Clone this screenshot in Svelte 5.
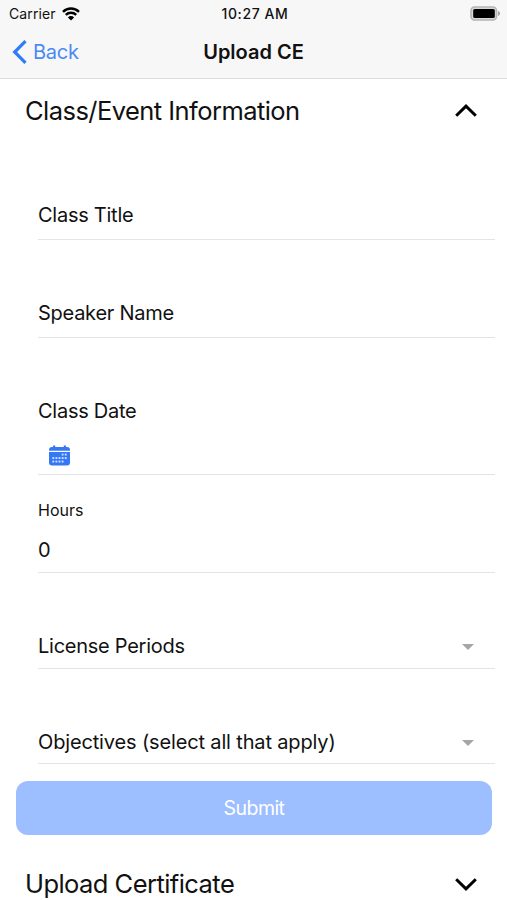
<script lang="ts">
    let infoOpen = $state(true);
    let certificateOpen = $state(false);
    let hours = $state(0);

    const textFields = ['Class Title', 'Speaker Name'];
    const selectFields = [
        { id: 'periods', label: 'License Periods' },
        { id: 'objectives', label: 'Objectives (select all that apply)' }
    ];

    // Day dots of the calendar icon, [column, row]
    const days = [
        [3, 0], [4, 0],
        [0, 1], [1, 1], [2, 1], [3, 1], [4, 1],
        [0, 2], [1, 2], [2, 2], [3, 2]
    ];
</script>

{#snippet chevron(open: boolean)}
    <svg class="chevron" width="24" height="14" viewBox="0 0 24 14" aria-hidden="true">
        <path d={open ? 'M2.2 11.8 12 2.2l9.8 9.6' : 'M2.2 2.2 12 11.8l9.8-9.6'} />
    </svg>
{/snippet}

<div class="screen">
    <header>
        <div class="status">
            <div class="carrier">
                <span>Carrier</span>
                <svg width="18" height="14" viewBox="0 0 18 14" aria-hidden="true">
                    <path d="M1 4.8a11.4 11.4 0 0 1 16 0" />
                    <path d="M3.8 7.9a7.4 7.4 0 0 1 10.4 0" />
                    <path class="solid" d="M9 13.6 5.9 10.4a4.4 4.4 0 0 1 6.2 0z" />
                </svg>
            </div>
            <span class="time">10:27 AM</span>
            <svg class="battery" width="31" height="15" viewBox="0 0 31 15" aria-hidden="true">
                <rect x="1" y="1" width="25.5" height="13" rx="3.5" fill="#d8d8d8" stroke="#b5b5b5" stroke-width="1.6" />
                <rect x="3.2" y="3" width="21.6" height="9" rx="1.5" fill="#000" />
                <path d="M28 5v5c2.6-1 2.6-4 0-5z" fill="#a0a0a0" />
            </svg>
        </div>
        <nav>
            <button class="back">
                <svg width="16" height="26" viewBox="0 0 16 26" aria-hidden="true">
                    <path d="M13.5 2.2 2.7 13l10.8 10.8" />
                </svg>
                <span>Back</span>
            </button>
            <h1>Upload CE</h1>
        </nav>
    </header>

    <button class="section" onclick={() => (infoOpen = !infoOpen)}>
        <span>Class/Event Information</span>
        {@render chevron(infoOpen)}
    </button>

    {#if infoOpen}
        <form>
            {#each textFields as label}
                <div class="field">
                    <span class="label">{label}</span>
                </div>
            {/each}
            <div class="field date">
                <span class="label">Class Date</span>
                <svg width="21" height="21" viewBox="0 0 21 21" aria-hidden="true">
                    <path d="M3 2h1V.6h2.2V2h8.600V.6H17V2h1a3 3 0 0 1 3 3v.8H0V5a3 3 0 0 1 3-3z" />
                    <path d="M0 7h21v10.500a3 3 0 0 1-3 3H3a3 3 0 0 1-3-3z" />
                    {#each days as [col, row]}
                        <rect class="day" x={3.4 + col * 3.1} y={8.600 + row * 3.5} width="1.8" height="1.9" />
                    {/each}
                </svg>
            </div>
            <div class="field hours">
                <span class="small-label">Hours</span>
                <span class="value">{hours}</span>
            </div>
            {#each selectFields as field}
                <div class="field select {field.id}">
                    <span class="label">{field.label}</span>
                    <span class="caret"></span>
                </div>
            {/each}
            <button type="button" class="submit" disabled>Submit</button>
        </form>
    {/if}

    <button class="section certificate" onclick={() => (certificateOpen = !certificateOpen)}>
        <span>Upload Certificate</span>
        {@render chevron(certificateOpen)}
    </button>
</div>

<style>
    :global(body) {
        margin: 0;
        background: #fff;
    }

    .screen {
        height: 900px;
        overflow: hidden;
        background: #fff;
        color: #111;
        font-family: Inter, "Liberation Sans", sans-serif;
        font-size: 20px;
    }

    button {
        margin: 0;
        padding: 0;
        border: none;
        background: none;
        color: inherit;
        font: inherit;
    }

    svg {
        display: block;
        fill: none;
    }

    header {
        box-sizing: border-box;
        height: 79px;
        border-bottom: 1px solid #dedede;
        background: #f7f7f7;
    }

    .status {
        display: grid;
        grid-template-columns: 1fr auto 1fr;
        align-items: center;
        height: 27px;
        padding: 0 6px 0 9px;
        font-size: 14px;
    }

    .carrier {
        display: flex;
        align-items: center;
        gap: 6px;
        letter-spacing: 0.1px;
    }

    .carrier path {
        stroke: #000;
        stroke-width: 2.4;
    }

    .carrier .solid {
        fill: #000;
        stroke: none;
    }

    .time {
        font-weight: 500;
        letter-spacing: 0.6px;
    }

    .battery {
        justify-self: end;
    }

    nav {
        display: grid;
        grid-template-columns: 1fr auto 1fr;
        align-items: center;
        height: 50px;
        padding: 0 12px;
    }

    .back {
        display: flex;
        align-items: center;
        gap: 5px;
        color: #4a8af5;
        letter-spacing: -0.25px;
    }

    .back path {
        stroke: #2f7cf6;
        stroke-width: 3.2;
    }

    h1 {
        margin: 0;
        font-size: 20px;
        font-weight: 600;
    }

    .section {
        display: flex;
        align-items: center;
        justify-content: space-between;
        width: 100%;
        height: 63px;
        padding: 0 29px 0 26px;
        font-size: 25.5px;
        letter-spacing: -0.55px;
    }

    .section span {
        margin-left: -1px;
    }

    .chevron path {
        stroke: #000;
        stroke-width: 3;
    }

    .field {
        box-sizing: border-box;
        display: flex;
        flex-direction: column;
        height: 98px;
        margin: 0 12px 0 38px;
        padding-top: 61px;
        border-bottom: 1px solid #e4e4e4;
        line-height: 24px;
    }

    .label {
        letter-spacing: -0.26px;
    }

    .date {
        height: 137px;
    }

    .date svg {
        margin: 22px 0 0 11px;
        fill: #3478f6;
    }

    .day {
        fill: #d5e4ff;
    }

    .hours {
        padding-top: 23px;
        gap: 16px;
    }

    .small-label {
        font-size: 16px;
    }

    .select {
        flex-direction: row;
        justify-content: space-between;
        height: 96px;
        padding-right: 21px;
    }

    .objectives {
        height: 95px;
    }

    .objectives .label {
        letter-spacing: -0.15px;
    }

    .caret {
        margin-top: 10px;
        width: 0;
        height: 0;
        border: 6px solid transparent;
        border-top-color: #a6a6a6;
        border-bottom: none;
    }

    .submit {
        display: block;
        width: 476px;
        height: 54px;
        margin: 17px 0 0 16px;
        border-radius: 12px;
        background: #9dbeff;
        color: #fff;
        font-size: 19.5px;
        letter-spacing: -0.55px;
    }

    .certificate {
        margin-top: 17px;
    }
</style>
